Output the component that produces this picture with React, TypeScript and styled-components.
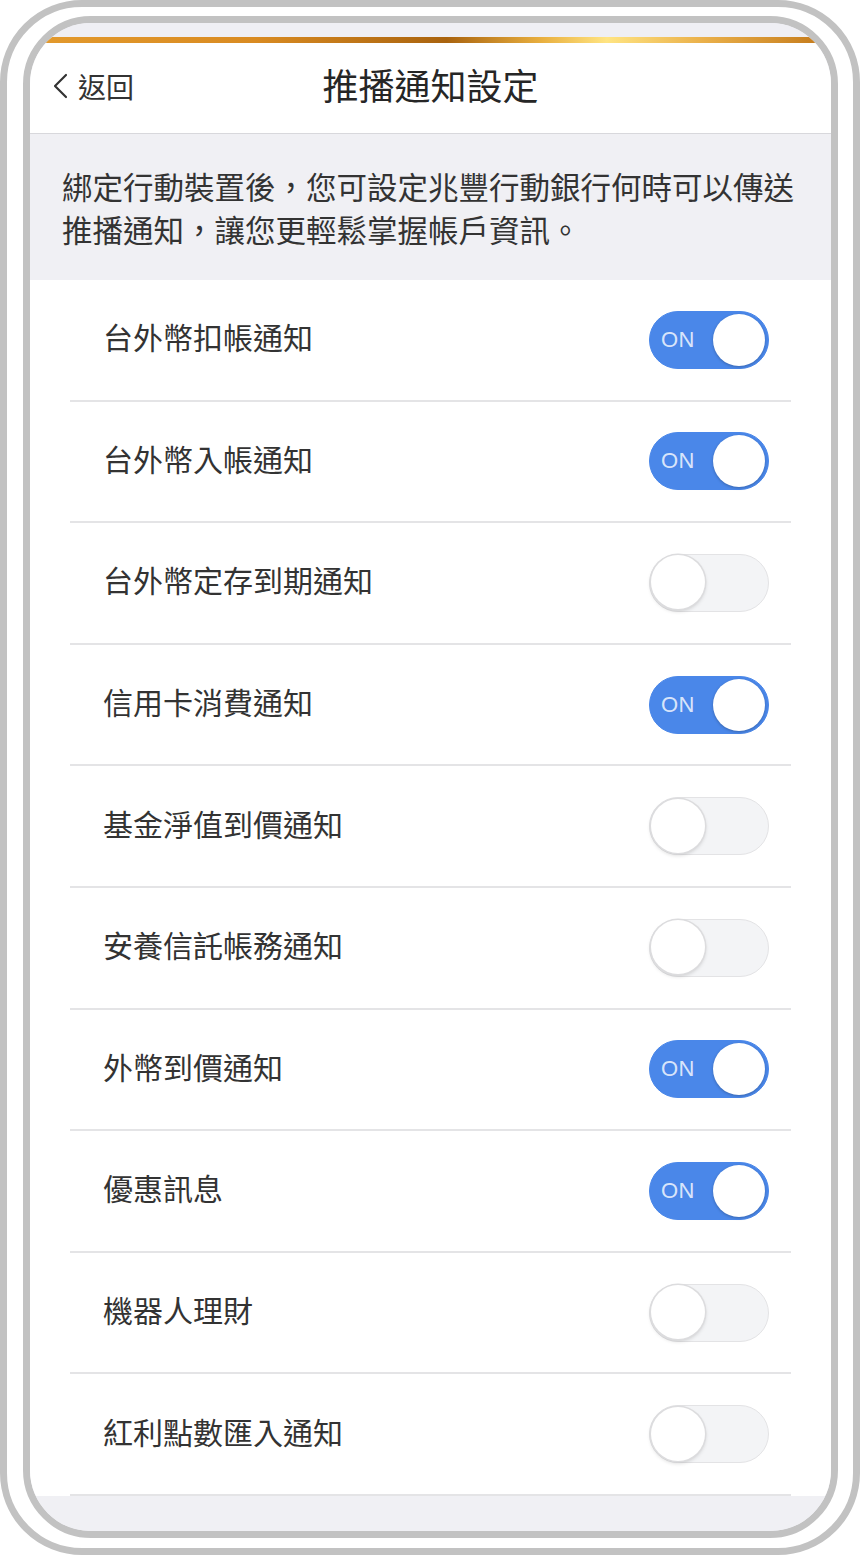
import React from 'react'
import styled, { createGlobalStyle } from 'styled-components'

const GlobalStyle = createGlobalStyle`
    html, body {
        margin: 0;
        padding: 0;
        background: #ffffff;
    }
    body {
        font-family: "Noto Sans CJK TC", "Noto Sans", sans-serif;
    }
`

const Frame = styled.div`
    width: 860px;
    height: 1555px;
    box-sizing: border-box;
    border: 7px solid #c2c2c2;
    border-radius: 82px;
    padding: 9px 15px 10px 16px;
    background: #ffffff;
`

const Screen = styled.div`
    height: 100%;
    box-sizing: border-box;
    border: 7px solid #c2c2c2;
    border-radius: 68px;
    overflow: hidden;
    display: flex;
    flex-direction: column;
    background: #f0f0f4;
`

const StatusStrip = styled.div`
    height: 14px;
    flex-shrink: 0;
    background: #efeff4;
`

const GoldLine = styled.div`
    height: 6px;
    flex-shrink: 0;
    background: linear-gradient(90deg, #e39a2d 0%, #d98b22 28%, #a9630f 52%, #e9b040 64%, #ffe482 72%, #eab04a 84%, #c27718 100%);
`

const NavBar = styled.div`
    height: 90px;
    flex-shrink: 0;
    box-sizing: content-box;
    border-bottom: 1px solid #d8d8dc;
    background: #ffffff;
    display: grid;
    grid-template-columns: 1fr auto 1fr;
    align-items: center;
`

const BackButton = styled.div`
    display: flex;
    align-items: center;
    gap: 9px;
    padding-left: 22px;
    margin-bottom: 4px;
    font-size: 28px;
    color: #333333;
    justify-self: start;
`

const Title = styled.div`
    font-size: 36px;
    color: #262626;
    margin-bottom: 8px;
`

const Description = styled.div`
    flex-shrink: 0;
    padding: 31px 32px 29px;
    font-size: 30.5px;
    line-height: 43px;
    color: #333333;
    background: #f0f0f4;
`

const List = styled.div`
    flex-shrink: 0;
    background: #ffffff;
`

const Row = styled.div`
    margin: 0 40px;
    height: 119.6px;
    border-bottom: 2px solid #e4e4e6;
    display: flex;
    align-items: center;
    justify-content: space-between;
    padding: 0 22px 0 33px;
`

const Label = styled.div`
    font-size: 30px;
    color: #333333;
    margin-bottom: 7px;
`

const Footer = styled.div`
    flex: 1;
    background: #f0f0f4;
`

const Toggle = styled.div<{ $on: boolean }>`
    position: relative;
    width: 120px;
    height: 58px;
    box-sizing: border-box;
    border-radius: 29px;
    background: ${p => (p.$on ? '#4a87e9' : '#f3f4f6')};
    border: ${p => (p.$on ? '1px solid #4a87e9' : '1.5px solid #e3e3e5')};
`

const Knob = styled.div<{ $on: boolean }>`
    position: absolute;
    top: ${p => (p.$on ? '2px' : '0.5px')};
    left: ${p => (p.$on ? '63px' : '0.5px')};
    width: ${p => (p.$on ? '52px' : '54px')};
    height: ${p => (p.$on ? '52px' : '54px')};
    border-radius: 50%;
    background: #ffffff;
    box-shadow: ${p => (p.$on
        ? '0 1px 3px rgba(0, 0, 0, 0.25)'
        : '0 0 0 1.5px #dcdcde, 0 2px 4px rgba(0, 0, 0, 0.18)')};
`

const OnText = styled.span`
    position: absolute;
    left: 11px;
    top: 50%;
    transform: translateY(-50%);
    font-family: "Liberation Sans", "Noto Sans", sans-serif;
    font-size: 22px;
    color: rgba(255, 255, 255, 0.8);
    letter-spacing: 0.5px;
`

const settings: { label: string, on: boolean }[] = [
    { label: '台外幣扣帳通知', on: true },
    { label: '台外幣入帳通知', on: true },
    { label: '台外幣定存到期通知', on: false },
    { label: '信用卡消費通知', on: true },
    { label: '基金淨值到價通知', on: false },
    { label: '安養信託帳務通知', on: false },
    { label: '外幣到價通知', on: true },
    { label: '優惠訊息', on: true },
    { label: '機器人理財', on: false },
    { label: '紅利點數匯入通知', on: false },
]

const Switch = ({ on }: { on: boolean }) => (
    <Toggle $on={on}>
        {on && <OnText>ON</OnText>}
        <Knob $on={on} />
    </Toggle>
)

const App = () => (
    <>
        <GlobalStyle />
        <Frame>
            <Screen>
                <StatusStrip />
                <GoldLine />
                <NavBar>
                    <BackButton>
                        <svg width="17" height="26" viewBox="0 0 17 26">
                            <path d="M14 2 L3 13 L14 24" fill="none" stroke="#333" strokeWidth="2.2" strokeLinecap="round" strokeLinejoin="round" />
                        </svg>
                        <span>返回</span>
                    </BackButton>
                    <Title>推播通知設定</Title>
                    <div />
                </NavBar>
                <Description>
                    綁定行動裝置後，您可設定兆豐行動銀行何時可以傳送<br />
                    推播通知，讓您更輕鬆掌握帳戶資訊。
                </Description>
                <List>
                    {settings.map(s => (
                        <Row key={s.label}>
                            <Label>{s.label}</Label>
                            <Switch on={s.on} />
                        </Row>
                    ))}
                </List>
                <Footer />
            </Screen>
        </Frame>
    </>
)

export default App
